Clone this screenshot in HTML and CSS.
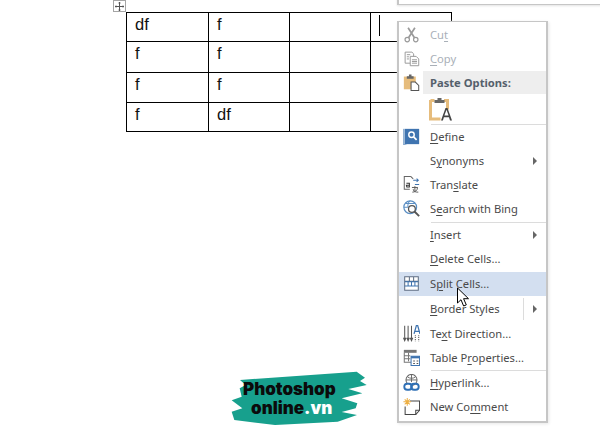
FILE: index.html
```html
<!DOCTYPE html>
<html lang="en">
<head>
<meta charset="utf-8">
<title>Split Cells</title>
<link rel="stylesheet" href="styles.css">
</head>
<body>
<div class="page">
  <div class="move-handle">
    <svg width="11" height="11" viewBox="0 0 11 11"><path d="M5.500 1v9M1 5.500h9M4.500 2h2M4.500 9h2M2 4.500v2M9 4.500v2" stroke="#555" fill="none"/></svg>
  </div>
  <table class="doc-table">
    <colgroup><col class="c1"><col class="c2"><col class="c2"><col class="c2"></colgroup>
    <tr class="r1"><td>df</td><td>f</td><td></td><td><span class="caret"></span></td></tr>
    <tr class="r2"><td>f</td><td>f</td><td></td><td></td></tr>
    <tr class="r3"><td>f</td><td>f</td><td></td><td></td></tr>
    <tr class="r4"><td>f</td><td>df</td><td></td><td></td></tr>
  </table>
</div>

<div class="top-panel"></div>

<div class="menu">
  <div class="row disabled">
    <span class="ico"><svg viewBox="0 0 20 20"><g fill="none" stroke="#9a9a9a"><circle cx="5" cy="16" r="2.600" stroke-width="1.400"/><circle cx="15" cy="16" r="2.600" stroke-width="1.400"/><path d="M6.500 13.800 14 2M13.500 13.800 6 2" stroke-width="2"/></g></svg></span>
    <span class="label">Cu<u>t</u></span>
  </div>
  <div class="row disabled">
    <span class="ico"><svg viewBox="0 0 20 20"><g fill="#fff" stroke="#9a9a9a" stroke-width="1.150"><path d="M2.500 2.500h8l2 2v11h-10z"/><path d="M8.500 7.500h7l3 3v8h-10z"/><path d="M4.500 5.500h4M4.500 8h2.500M4.500 10.500h2.500M10.500 11.500h6M10.500 13.500h6M10.500 15.500h6" fill="none"/></g></svg></span>
    <span class="label"><u>C</u>opy</span>
  </div>
  <div class="row head-row">
    <span class="ico"><svg viewBox="0 0 20 20"><path d="M1 3h14v15H1z" fill="#e6bc7c"/><path d="M4.500 2.500h2.500v-2h3v2h2.500v3h-8z" fill="#666"/><path d="M9.500 9.500h5l4 4v6h-9z" fill="#fff" stroke="#555" stroke-width="1.200"/></svg></span>
    <span class="head">Paste Options:</span>
  </div>
  <div class="paste-row">
    <svg width="24" height="24" viewBox="0 0 24 24"><path d="M1.500 3.500h4M15 3.500h3.500v9M1.500 3v19h10" fill="none" stroke="#e6bc7c" stroke-width="3"/><path d="M5.500 3h3V1h4v2h3v3h-10z" fill="#666"/><path d="M12 23.500 16.500 11h2L23 23.500h-2l-1-3.200h-5.100l-1 3.200zM15.400 18.500h4.200l-2.100-5.800z" fill="#444"/></svg>
  </div>
  <div class="sep"></div>

  <div class="row">
    <span class="ico"><svg viewBox="0 0 20 20"><path d="M2 1h17v18H2z" fill="#3f74b0"/><path d="M1 1v19h3" fill="none" stroke="#3f74b0"/><circle cx="10" cy="8" r="3.200" fill="#3f74b0" stroke="#fff" stroke-width="1.700"/><path d="m12.500 10.500 3.500 3.500" stroke="#fff" stroke-width="2"/></svg></span>
    <span class="label"><u>D</u>efine</span>
  </div>
  <div class="row">
    <span class="ico"></span>
    <span class="label">S<u>y</u>nonyms</span>
    <span class="arrow"></span>
  </div>
  <div class="row">
    <span class="ico"><svg viewBox="0 0 20 20"><path d="M9 .5H1.500v15H8M9 .5l3 3" fill="none" stroke="#666" stroke-width="1.200"/><path d="M4 8.500h3.500V13H4.500L4 11h3.500" fill="none" stroke="#333" stroke-width="1.200"/><path d="M12 5h6M16 3l2 2-2 2M19 10h-5" fill="none" stroke="#3f74b0" stroke-width="1.200"/><path d="M10.500 13.500h7M14 12v6M11 19c3 0 6-2 6-5M12 15.500c0 3 3 3.500 6 3.500" fill="none" stroke="#555" stroke-width="1.100"/></svg></span>
    <span class="label">Tran<u>s</u>late</span>
  </div>
  <div class="row">
    <span class="ico"><svg viewBox="0 0 20 20"><circle cx="8.500" cy="8.500" r="7.500" fill="none" stroke="#5b8fc4" stroke-width="1.400"/><path d="M1 8.500h5M8.500 1C5.500 3 5.500 6 6 8.500M3 4h11" fill="none" stroke="#5b8fc4" stroke-width="1.200"/><circle cx="10.500" cy="10.500" r="4" fill="#fff" stroke="#555" stroke-width="1.500"/><path d="m13.500 13.500 5.500 5.500" stroke="#555" stroke-width="2.200"/></svg></span>
    <span class="label">S<u>e</u>arch with Bing</span>
  </div>
  <div class="sep gap"></div>

  <div class="row">
    <span class="ico"></span>
    <span class="label"><u>I</u>nsert</span>
    <span class="arrow"></span>
  </div>
  <div class="row">
    <span class="ico"></span>
    <span class="label"><u>D</u>elete Cells...</span>
  </div>
  <div class="row active gap">
    <span class="ico"><svg viewBox="0 0 20 20"><path d="M2 2h16v16H2zM2 7.500h16M7.500 2v5.500M12.500 2v5.500" fill="#fff" stroke="#5f6e82" stroke-width="1.200"/><path d="M2 8h16M2 13h16M6 8v5M10 8v5M14 8v5" fill="none" stroke="#3f74b0" stroke-width="1.200"/></svg></span>
    <span class="label">S<u>p</u>lit Cells...</span>
  </div>
  <div class="row gap">
    <span class="ico"></span>
    <span class="label"><u>B</u>order Styles</span>
    <span class="divider"></span>
    <span class="arrow near"></span>
  </div>
  <div class="row gap">
    <span class="ico"><svg viewBox="0 0 20 20"><path d="M2 1v16M6 1v16M10 1v16M.5 15 2 18.500 3.500 15M4.500 15 6 18.500 7.500 15M8.500 15 10 18.500 11.500 15" fill="none" stroke="#555" stroke-width="1.200"/><path d="M13 10.500 15.800.5h1.400l2.800 10M14 7.500h5" fill="none" stroke="#3f74b0" stroke-width="1.500"/><path d="M14.500 12v7M18.500 12v7" stroke="#555" stroke-width="1.200" stroke-dasharray="1.200 1"/></svg></span>
    <span class="label">Te<u>x</u>t Direction...</span>
  </div>
  <div class="row">
    <span class="ico"><svg viewBox="0 0 20 20"><path d="M1 1h15v3.500H1z" fill="#777"/><path d="M1.500 4.500v11h8M6.500 4.500v10M1.500 8h7M1.500 11.500h7" fill="none" stroke="#777" stroke-width="1.200"/><path d="M9.500 8.500h10v11h-10z" fill="#fff" stroke="#3f74b0" stroke-width="1.200"/><path d="M9.500 8.500h10v2.500h-10z" fill="#3f74b0"/><path d="M12 14h2M16 14h2M12 17h2M16 17h2" stroke="#555" stroke-width="1.200"/></svg></span>
    <span class="label">Table P<u>r</u>operties...</span>
  </div>
  <div class="sep"></div>

  <div class="row">
    <span class="ico"><svg viewBox="0 0 20 20"><circle cx="10" cy="7" r="6.500" fill="none" stroke="#666" stroke-width="1.200"/><path d="M3.500 7h13M10 .5v9M5.500 3.500c2.500 2 6.500 2 9 0" fill="none" stroke="#666" stroke-width="1.100"/><rect x="1.500" y="11.500" width="9" height="7" rx="3.500" fill="#fff" stroke="#2e6fb5" stroke-width="2.200"/><rect x="9.500" y="11.500" width="9" height="7" rx="3.500" fill="none" stroke="#2e6fb5" stroke-width="2.200"/></svg></span>
    <span class="label"><u>H</u>yperlink...</span>
  </div>
  <div class="row">
    <span class="ico"><svg viewBox="0 0 20 20"><path d="M8 3.500h11.500v11l-4.500 5H2.500V10" fill="#fff" stroke="#444" stroke-width="1.200"/><path d="M15 19.500v-5h4.500" fill="none" stroke="#444" stroke-width="1.200"/><path d="M5 0v9M.5 4.500h9M2 1.500l6 6M8 1.500l-6 6" stroke="#eeb044" stroke-width="1.200"/></svg></span>
    <span class="label">New Co<u>m</u>ment</span>
  </div>
</div>

<svg class="pointer" width="14" height="21" viewBox="0 0 14 21"><path d="M1.500 1v15l3.500-3.300 2.600 6.300 2.700-1.100-2.700-6.200h4.900z" fill="#fff" stroke="#000"/></svg>

<div class="logo">
  <svg class="brush" width="150" height="62" viewBox="0 0 450 186"><path d="M45 45 395 20 420 38 405 48 425 60 370 72 412 85 350 100 397 115 392 130 350 141 396 150 338 170 150 180 28 165 20 140 52 130 20 106 50 95 44 70 62 60z" fill="#17a08d"/></svg>
  <div class="logo-text">
    <span class="logo-line">Photoshop</span>
    <span class="logo-line second">online<span class="vn">.vn</span></span>
  </div>
</div>
</body>
</html>
```
FILE: styles.css
```css
html, body {
  margin: 0;
  padding: 0;
  background: #fff;
}
body {
  width: 600px;
  height: 427px;
  overflow: hidden;
  position: relative;
}
.page {
  padding: 12px 0 0 126px;
}
.doc-table {
  border-collapse: collapse;
  table-layout: fixed;
  width: 325px;
  font: 16.500px/18px "Liberation Sans", Arial, sans-serif;
  color: #111;
}
.c1 { width: 82px; }
.c2 { width: 81px; }
.doc-table td {
  border: 1px solid #000;
  padding: 2px 0 1px 8px;
  vertical-align: top;
}
.r1 { height: 29px; }
.r2 { height: 31px; }
.r3 { height: 30px; }
.r4 { height: 29px; }
.caret {
  display: block;
  width: 1px;
  height: 21px;
  background: #000;
}
.move-handle {
  position: absolute;
  left: 113px;
  top: 0;
  width: 11px;
  height: 10px;
  border: 1px solid #a5a5a5;
  overflow: hidden;
  background: #fff;
}
.move-handle svg { display: block; }

.top-panel {
  position: absolute;
  left: 397px;
  top: -10px;
  width: 203px;
  height: 14px;
  border: 1px solid #c6c6c6;
  border-width: 0 0 1px 2px;
  box-shadow: 0 1px 2px #e4e4e4;
  background: #fff;
}

.menu {
  position: absolute;
  left: 397px;
  top: 21px;
  width: 147px;
  height: 398px;
  padding: 1px 0 0 0;
  border: 2px solid #c6c6c6;
  border-width: 1px 2px 2px 2px;
  background: #fff;
  box-shadow: 1px 1px 3px #e8e8e8;
  font: 11.200px/16px "Noto Sans", "Open Sans", sans-serif;
  color: #4a4a4a;
  display: flex;
  flex-direction: column;
}
.row {
  display: flex;
  align-items: center;
  height: 24px;
  flex: none;
}
.gap { margin-top: 1px; }
.ico {
  flex: none;
  width: 31px;
  height: 20px;
  padding: 1px 0 0 4px;
  box-sizing: border-box;
}
.ico svg { display: block; width: 17px; height: 17px; }
.label { flex: 1; white-space: nowrap; }
.label u { text-underline-offset: 2px; text-decoration-thickness: 1px; }
.disabled { color: #a9b0b8; }
.head-row { height: 23px; }
.head {
  flex: 1;
  align-self: stretch;
  display: flex;
  align-items: center;
  margin-left: -7px;
  padding-left: 7px;
  background: #eeeeee;
  font-weight: 700;
  color: #55606b;
}
.paste-row {
  height: 30px;
  padding: 3px 0 0 30px;
  box-sizing: border-box;
  flex: none;
}
.paste-row svg { display: block; }
.sep {
  flex: none;
  height: 1px;
  margin-left: 32px;
  background: #dcdcdc;
}
.active { background: #d3dff0; }
.arrow {
  flex: none;
  width: 0;
  height: 0;
  margin-right: 9px;
  border-left: 4px solid #666;
  border-top: 4px solid transparent;
  border-bottom: 4px solid transparent;
}
.arrow.near { margin-left: 9px; }
.divider {
  flex: none;
  width: 1px;
  height: 22px;
  background: #dcdcdc;
}

.pointer {
  position: absolute;
  left: 456px;
  top: 287px;
}

.logo {
  position: absolute;
  left: 225px;
  top: 365px;
  width: 150px;
  height: 62px;
}
.brush {
  position: absolute;
  left: 0;
  top: 0;
}
.logo-text {
  position: relative;
  display: flex;
  flex-direction: column;
  padding-top: 15px;
  font: 900 17px/19px Inter, Lato, sans-serif;
  color: #0b0b0b;
}
.logo-line { padding-left: 18px; white-space: nowrap; }
.logo-line.second { padding-left: 26px; }
.vn { color: #fff; }
```
